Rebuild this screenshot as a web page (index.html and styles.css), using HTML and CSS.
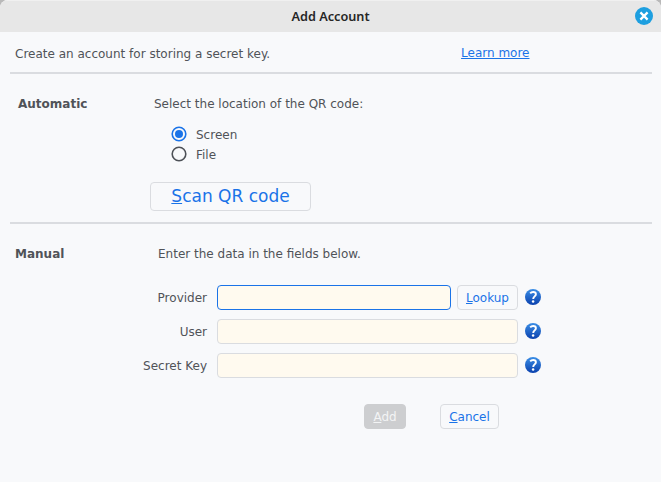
FILE: index.html
```html
<!DOCTYPE html>
<html lang="en">
<head>
<meta charset="utf-8">
<title>Add Account</title>
<link rel="stylesheet" href="styles.css">
</head>
<body>
<svg class="defs" width="0" height="0" aria-hidden="true">
  <linearGradient id="help-fill" x1="0" y1="0" x2="0" y2="1">
    <stop offset="0" stop-color="#3b8ee6"/>
    <stop offset="1" stop-color="#0a41ae"/>
  </linearGradient>
  <symbol id="help" viewBox="0 0 16 16">
    <circle cx="8" cy="8" r="8" fill="url(#help-fill)"/>
    <path d="M5.2 4.3C6 3.3 7 3 8.1 3c1.7 0 2.8.9 2.8 2.3 0 2-2.7 2.2-2.7 4.6" fill="none" stroke="#fff" stroke-width="1.9"/>
    <circle cx="8.1" cy="12.4" r="1.25" fill="#fff"/>
  </symbol>
</svg>
<main class="window">
  <header class="titlebar">
    <h1 class="title">Add Account</h1>
    <button class="close" aria-label="Close">
      <svg width="18" height="18" viewBox="0 0 18 18"><circle cx="9" cy="9" r="9" fill="#1d9fe0"/><path d="M5.4 5.4l7.2 7.2M12.6 5.4l-7.2 7.2" stroke="#fff" stroke-width="2.3"/></svg>
    </button>
  </header>
  <section class="intro">
    <p class="intro-text">Create an account for storing a secret key.</p>
    <a class="link">Learn more</a>
  </section>
  <section class="automatic">
    <h2 class="heading">Automatic</h2>
    <div class="content">
      <p class="prompt">Select the location of the QR code:</p>
      <div class="radios">
        <label class="radio"><svg width="16" height="16" viewBox="0 0 16 16"><circle cx="8" cy="8" r="6.8" fill="none" stroke="#1a73e8" stroke-width="1.6"/><circle cx="8" cy="8" r="4" fill="#1a73e8"/></svg>Screen</label>
        <label class="radio"><svg width="16" height="16" viewBox="0 0 16 16"><circle cx="8" cy="8" r="6.8" fill="none" stroke="#4d5157" stroke-width="1.6"/></svg>File</label>
      </div>
      <button class="button scan"><span class="key">S</span>can QR code</button>
    </div>
  </section>
  <section class="manual">
    <div class="manual-head">
      <h2 class="heading">Manual</h2>
      <p>Enter the data in the fields below.</p>
    </div>
    <div class="fields">
      <label class="label" for="provider">Provider</label>
      <div class="control"><input class="field focused" id="provider"><button class="button lookup"><span class="key">L</span>ookup</button></div>
      <svg class="help"><use href="#help"/></svg>
      <label class="label" for="user">User</label>
      <div class="control"><input class="field" id="user"></div>
      <svg class="help"><use href="#help"/></svg>
      <label class="label" for="secret">Secret Key</label>
      <div class="control"><input class="field" id="secret"></div>
      <svg class="help"><use href="#help"/></svg>
    </div>
    <div class="actions">
      <button class="button add" disabled><span class="key">A</span>dd</button>
      <button class="button cancel"><span class="key">C</span>ancel</button>
    </div>
  </section>
</main>
</body>
</html>
```
FILE: styles.css
```css
* { box-sizing: border-box; }
body { margin: 0; background: #b9b9b9; }
h1, h2, p { margin: 0; }
button, input { font: inherit; margin: 0; padding: 0; }
svg { display: block; flex: none; }
.defs { position: absolute; }
.window {
  width: 661px;
  height: 482px;
  overflow: hidden;
  border-radius: 8px 8px 0 0;
  background: #f8f9fb;
  color: #505358;
  font: 12px/14px "DejaVu Sans", sans-serif;
}
.titlebar {
  display: grid;
  grid-template-columns: 1fr auto 1fr;
  align-items: center;
  height: 32px;
  padding: 0 8px;
  background: #e7e7e7;
  border-top: 1px solid #f0f0f0;
}
.title {
  grid-column: 2;
  color: #262626;
  font: 600 12.7px/17px "Noto Sans", sans-serif;
}
.close { justify-self: end; border: 0; background: none; }
.close svg { margin-top: -1px; }
.intro {
  display: flex;
  justify-content: space-between;
  height: 42px;
  margin: 0 9px 0 10px;
  padding: 14px 122.5px 0 5px;
  border-bottom: 2px solid #dadce0;
}
.intro-text { padding-top: 1px; }
.link { color: #1a73e8; text-decoration: underline; text-underline-offset: 1px; }
.automatic {
  display: flex;
  height: 150px;
  margin: 0 9px 0 10px;
  padding: 23px 0 0 8px;
  border-bottom: 2px solid #dadce0;
}
.heading { width: 132px; font: bold 12px/14px "DejaVu Sans", sans-serif; }
.prompt { padding-left: 4px; }
.radios { padding: 14px 0 0 21px; }
.radio { display: flex; align-items: center; gap: 9px; height: 20px; }
.radio svg { margin-top: -2px; }
.button {
  border: 1px solid #dadce0;
  border-radius: 4px;
  background: #f8f9fb;
  color: #1a73e8;
  text-align: center;
  height: 25px;
}
.key { text-decoration: underline; text-underline-offset: 1px; }
.scan { width: 161px; height: 29px; margin-top: 17px; padding-bottom: 2px; font-size: 17px; line-height: 20px; }
.manual { padding: 23px 0 0 15px; }
.manual-head { display: flex; }
.manual-head .heading { width: 143px; }
.fields {
  display: grid;
  grid-template-columns: 192px 301px 16px;
  grid-auto-rows: 25px;
  row-gap: 9px;
  align-items: center;
  margin-top: 24px;
}
.label { text-align: right; }
.control { display: flex; gap: 6px; margin-left: 10px; width: 301px; }
.field {
  flex: 1;
  min-width: 0;
  height: 25px;
  border: 1px solid #dadce0;
  border-radius: 4px;
  background: #fffaef;
}
.focused { border-color: #1a73e8; }
.lookup { width: 61px; }
.help { width: 16px; height: 16px; margin: -1px 0 0 17px; }
.actions { display: flex; gap: 34px; margin: 26px 0 0 349px; }
.add { width: 42px; border-color: #cdced0; background: #cdced0; color: #f3f4f5; }
.cancel { width: 59px; }
```
